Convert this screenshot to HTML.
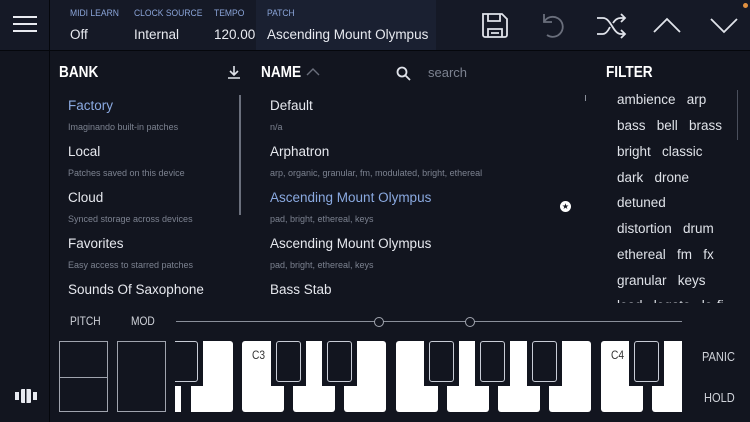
<!DOCTYPE html>
<html><head><style>
*{margin:0;padding:0;box-sizing:border-box}
body{width:750px;height:422px;background:#12151f;font-family:"Liberation Sans",sans-serif;color:#e6e8ee;position:relative;overflow:hidden}
.a{position:absolute;white-space:nowrap}
.cond{font-family:"Liberation Sans Narrow","Liberation Sans",sans-serif;transform:scaleX(.85);transform-origin:left}
.lbl{font-size:9.5px;color:#8aa4d8;transform:scaleX(.9);transform-origin:left}
.val{font-size:13.5px;color:#e8eaf0}
.h{font-size:16px;font-weight:bold;color:#fff}
.item{font-size:13.5px;color:#e6e8ee}
.sub{font-size:9px;color:#7c8290}
.tag{font-size:13.5px;color:#dfe2e8}
.wk{position:absolute;top:341px;height:71px;width:42px;background:#fff;border-radius:3px}
.cut{position:absolute;top:336px;height:50px;background:#12151f}
.bk{position:absolute;top:341px;height:41px;border:1.5px solid #c8ccd6;border-radius:3px;background:#12151f}
</style></head><body>
<div class="a" style="left:0;top:0;width:750px;height:50px;background:#151926"></div>
<div class="a" style="left:256px;top:0;width:180px;height:50px;background:#1a2031"></div>
<div class="a" style="left:0;top:50px;width:750px;height:1px;background:#05070c"></div>
<div class="a" style="left:49px;top:0;width:1px;height:422px;background:#05070c"></div>
<div class="a" style="left:13px;top:16px;width:24px;height:1.5px;background:#e8eaf0"></div>
<div class="a" style="left:13px;top:23px;width:24px;height:1.5px;background:#e8eaf0"></div>
<div class="a" style="left:13px;top:30px;width:24px;height:1.5px;background:#e8eaf0"></div>
<div class="a lbl" style="left:70px;top:8px">MIDI LEARN</div>
<div class="a lbl" style="left:134px;top:8px">CLOCK SOURCE</div>
<div class="a lbl" style="left:214px;top:8px">TEMPO</div>
<div class="a lbl" style="left:267px;top:8px">PATCH</div>
<div class="a val" style="left:70px;top:27px">Off</div>
<div class="a val" style="left:134px;top:27px">Internal</div>
<div class="a val" style="left:214px;top:27px">120.00</div>
<div class="a val" style="left:267px;top:27px">Ascending Mount Olympus</div>
<svg class="a" style="left:480px;top:10px" width="30" height="30" viewBox="0 0 30 30" fill="none" stroke="#e0e3ea" stroke-width="1.8"><path d="M3 4h19l5 5v16a2 2 0 0 1-2 2H5a2 2 0 0 1-2-2z"/><path d="M8 4v7h12V4M8 27v-8h14v8M11 23h8"/></svg>
<svg class="a" style="left:538px;top:11px" width="30" height="30" viewBox="0 0 30 30" fill="none" stroke="#6a6f7c" stroke-width="1.8"><path d="M6 3v8h8"/><path d="M6 11A10 10 0 1 1 9 24"/></svg>
<svg class="a" style="left:595px;top:13px" width="32" height="26" viewBox="0 0 32 26" fill="none" stroke="#e0e3ea" stroke-width="1.8"><path d="M2 5h6c8 0 10 16 18 16h4M2 21h6c3 0 5-3 7-7M18 10c2-3 4-5 8-5h4M26 1l4 4-4 4M26 17l4 4-4 4"/></svg>
<svg class="a" style="left:652px;top:16px" width="30" height="18" viewBox="0 0 30 18" fill="none" stroke="#e0e3ea" stroke-width="1.8"><path d="M2 16L15 3l13 13"/></svg>
<svg class="a" style="left:709px;top:16px" width="30" height="18" viewBox="0 0 30 18" fill="none" stroke="#e0e3ea" stroke-width="1.8"><path d="M2 3l13 13L28 3"/></svg>
<div class="a" style="left:743px;top:3px;width:5px;height:5px;border-radius:50%;background:#e09040"></div>

<div class="a h cond" style="left:59px;top:64px">BANK</div>
<svg class="a" style="left:226px;top:64px" width="16" height="16" viewBox="0 0 16 16" fill="none" stroke="#e0e3ea" stroke-width="1.6"><path d="M8 2v9M4 7l4 4 4-4M2 14h12"/></svg>
<div class="a h cond" style="left:261px;top:64px">NAME</div>
<svg class="a" style="left:306px;top:67px" width="14" height="9" viewBox="0 0 14 9" fill="none" stroke="#6a6f7c" stroke-width="1.4"><path d="M1 8l6-6 6 6"/></svg>
<svg class="a" style="left:396px;top:66px" width="15" height="15" viewBox="0 0 15 15" fill="none" stroke="#e0e3ea" stroke-width="1.8"><circle cx="6" cy="6" r="4.5"/><path d="M9.5 9.5L14 14"/></svg>
<div class="a" style="left:428px;top:65px;font-size:13px;color:#7c8290">search</div>
<div class="a h cond" style="left:606px;top:64px">FILTER</div>

<div class="a item" style="left:68px;top:98px;color:#8aa9e0">Factory</div>
<div class="a sub" style="left:68px;top:122px">Imaginando built-in patches</div>
<div class="a item" style="left:68px;top:144px">Local</div>
<div class="a sub" style="left:68px;top:168px">Patches saved on this device</div>
<div class="a item" style="left:68px;top:190px">Cloud</div>
<div class="a sub" style="left:68px;top:214px">Synced storage across devices</div>
<div class="a item" style="left:68px;top:236px">Favorites</div>
<div class="a sub" style="left:68px;top:260px">Easy access to starred patches</div>
<div class="a item" style="left:68px;top:282px">Sounds Of Saxophone</div>
<div class="a" style="left:239px;top:95px;width:2px;height:120px;background:#6a6f7c"></div>

<div class="a item" style="left:270px;top:98px">Default</div>
<div class="a sub" style="left:270px;top:122px">n/a</div>
<div class="a item" style="left:270px;top:144px">Arphatron</div>
<div class="a sub" style="left:270px;top:168px">arp, organic, granular, fm, modulated, bright, ethereal</div>
<div class="a item" style="left:270px;top:190px;color:#8aa9e0">Ascending Mount Olympus</div>
<div class="a sub" style="left:270px;top:214px">pad, bright, ethereal, keys</div>
<div class="a item" style="left:270px;top:236px">Ascending Mount Olympus</div>
<div class="a sub" style="left:270px;top:260px">pad, bright, ethereal, keys</div>
<div class="a item" style="left:270px;top:282px">Bass Stab</div>
<div class="a" style="left:585px;top:95px;width:1px;height:6px;background:#8a8f9a"></div>
<div class="a" style="left:560px;top:201px;width:11px;height:11px;border-radius:50%;background:#fff;color:#12151f;font-size:8px;text-align:center;line-height:11px">★</div>

<div class="a tag" style="left:617px;top:92px">ambience&nbsp;&nbsp;&nbsp;arp</div>
<div class="a tag" style="left:617px;top:118px">bass&nbsp;&nbsp;&nbsp;bell&nbsp;&nbsp;&nbsp;brass</div>
<div class="a tag" style="left:617px;top:144px">bright&nbsp;&nbsp;&nbsp;classic</div>
<div class="a tag" style="left:617px;top:170px">dark&nbsp;&nbsp;&nbsp;drone</div>
<div class="a tag" style="left:617px;top:195px">detuned</div>
<div class="a tag" style="left:617px;top:221px">distortion&nbsp;&nbsp;&nbsp;drum</div>
<div class="a tag" style="left:617px;top:247px">ethereal&nbsp;&nbsp;&nbsp;fm&nbsp;&nbsp;&nbsp;fx</div>
<div class="a tag" style="left:617px;top:273px">granular&nbsp;&nbsp;&nbsp;keys</div>
<div class="a" style="left:617px;top:299px;width:110px;height:4px;overflow:hidden"><div class="tag" style="font-size:13.5px;line-height:13px">lead&nbsp;&nbsp;&nbsp;legato&nbsp;&nbsp;&nbsp;lo-fi</div></div>
<div class="a" style="left:737px;top:90px;width:1px;height:50px;background:#4a4f5c"></div>

<div class="a cond" style="left:70px;top:314px;font-size:12px;color:#d0d3da">PITCH</div>
<div class="a cond" style="left:131px;top:314px;font-size:12px;color:#d0d3da">MOD</div>
<div class="a" style="left:176px;top:321px;width:506px;height:1px;background:#8a8f9a"></div>
<div class="a" style="left:374px;top:317px;width:10px;height:10px;border-radius:50%;border:1.5px solid #a0a4ae;background:#12151f"></div>
<div class="a" style="left:465px;top:317px;width:10px;height:10px;border-radius:50%;border:1.5px solid #a0a4ae;background:#12151f"></div>
<div class="a" style="left:59px;top:341px;width:49px;height:71px;border:1.5px solid #a0a4ae"></div>
<div class="a" style="left:60px;top:377px;width:47px;height:1px;background:#a0a4ae"></div>
<div class="a" style="left:117px;top:341px;width:49px;height:71px;border:1.5px solid #a0a4ae"></div>

<div class="a" style="left:175px;top:336px;width:507px;height:80px;overflow:hidden">
<div style="position:relative;left:-175px">
<div class="wk" style="left:172px;top:5px"></div>
<div class="wk" style="left:191px;top:5px"></div>
<div class="wk" style="left:242px;top:5px"></div>
<div class="wk" style="left:293px;top:5px"></div>
<div class="wk" style="left:344px;top:5px"></div>
<div class="wk" style="left:396px;top:5px"></div>
<div class="wk" style="left:447px;top:5px"></div>
<div class="wk" style="left:498px;top:5px"></div>
<div class="wk" style="left:549px;top:5px"></div>
<div class="wk" style="left:601px;top:5px"></div>
<div class="wk" style="left:652px;top:5px"></div>
<div class="a" style="left:181px;top:0;width:10px;height:80px;background:#12151f"></div>
<div class="cut" style="left:170px;top:0;width:33px"></div>
<div class="cut" style="left:271px;top:0;width:35px"></div>
<div class="cut" style="left:322px;top:0;width:35px"></div>
<div class="cut" style="left:424px;top:0;width:35px"></div>
<div class="cut" style="left:475px;top:0;width:35px"></div>
<div class="cut" style="left:527px;top:0;width:35px"></div>
<div class="cut" style="left:629px;top:0;width:35px"></div>
<div class="bk" style="left:170px;top:5px;width:28px"></div>
<div class="bk" style="left:276px;top:5px;width:25px"></div>
<div class="bk" style="left:327px;top:5px;width:25px"></div>
<div class="bk" style="left:429px;top:5px;width:25px"></div>
<div class="bk" style="left:480px;top:5px;width:25px"></div>
<div class="bk" style="left:532px;top:5px;width:25px"></div>
<div class="bk" style="left:634px;top:5px;width:25px"></div>
<div class="a cond" style="left:252px;top:12px;font-size:12px;color:#333">C3</div>
<div class="a cond" style="left:611px;top:12px;font-size:12px;color:#333">C4</div>
</div></div>

<div class="a cond" style="left:702px;top:349px;font-size:13px;color:#d0d3da">PANIC</div>
<div class="a cond" style="left:704px;top:390px;font-size:13px;color:#d0d3da">HOLD</div>
<svg class="a" style="left:15px;top:389px" width="22" height="14" viewBox="0 0 22 14" fill="#e8eaf0"><rect x="0" y="3" width="4" height="8"/><rect x="6" y="0" width="10" height="14" rx="1"/><rect x="18" y="3" width="4" height="8"/><rect x="10" y="0" width="1.5" height="14" fill="#12151f"/></svg>
</body></html>
